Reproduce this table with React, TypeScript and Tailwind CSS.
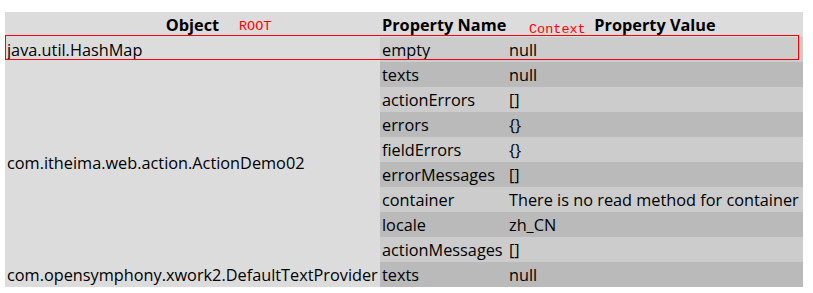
const props: [string, string][] = [
  ['empty', 'null'],
  ['texts', 'null'],
  ['actionErrors', '[]'],
  ['errors', '{}'],
  ['fieldErrors', '{}'],
  ['errorMessages', '[]'],
  ['container', 'There is no read method for container'],
  ['locale', 'zh_CN'],
  ['actionMessages', '[]'],
  ['texts', 'null'],
];

const font = { fontFamily: '"Open Sans", "Noto Sans", sans-serif' };

export default function App() {
  return (
    <div className="min-h-screen bg-white pl-[5px] pt-[12px] text-[16.3px] text-black" style={font}>
      <div className="relative w-[798px]">
        <div className="grid grid-cols-[375px_127px_296px] auto-rows-[25px]">
          {/* header */}
          <div className="relative flex items-center justify-center bg-[#dcdcdc] pt-[1px] font-bold">
            Object
            <span className="absolute left-[234px] top-[5px] font-['Liberation_Mono',monospace] text-[13.5px] font-normal text-[#ff0000]">
              ROOT
            </span>
          </div>
          <div className="flex items-center bg-[#dcdcdc] pl-[2px] pt-[1px] font-bold whitespace-nowrap">Property Name</div>
          <div className="relative flex items-center justify-center bg-[#dcdcdc] pt-[1px] font-bold">
            Property Value
            <span className="absolute left-[22px] top-[8px] font-['Liberation_Mono',monospace] text-[13.5px] font-normal text-[#ff0000]">
              Context
            </span>
          </div>

          {/* object column */}
          <div className="col-start-1 row-start-2 flex items-center bg-[#dcdcdc] pl-[2px] pt-[2px]">java.util.HashMap</div>
          <div className="col-start-1 row-start-3 row-span-8 flex items-center bg-[#dcdcdc] pl-[2px] pt-[2px]">
            com.itheima.web.action.ActionDemo02
          </div>
          <div className="col-start-1 row-start-11 flex items-center bg-[#dcdcdc] pl-[2px] pt-[2px] whitespace-nowrap">
            com.opensymphony.xwork2.DefaultTextProvider
          </div>

          {/* property rows */}
          {props.map(([name, value], i) => {
            const bg = i % 2 === 0 ? 'bg-[#cccccc]' : 'bg-[#bababa]';
            return [
              <div key={'n' + i} className={`col-start-2 flex items-center pl-[2px] pt-[2px] whitespace-nowrap ${bg}`}>
                {name}
              </div>,
              <div key={'v' + i} className={`col-start-3 flex items-center pl-[2px] pt-[2px] whitespace-nowrap ${bg}`}>
                {value}
              </div>,
            ];
          })}
        </div>

        {/* highlighted row outline */}
        <div className="pointer-events-none absolute left-0 top-[23px] h-[25px] w-[794px] border border-[#ff0000]" />
      </div>
    </div>
  );
}
